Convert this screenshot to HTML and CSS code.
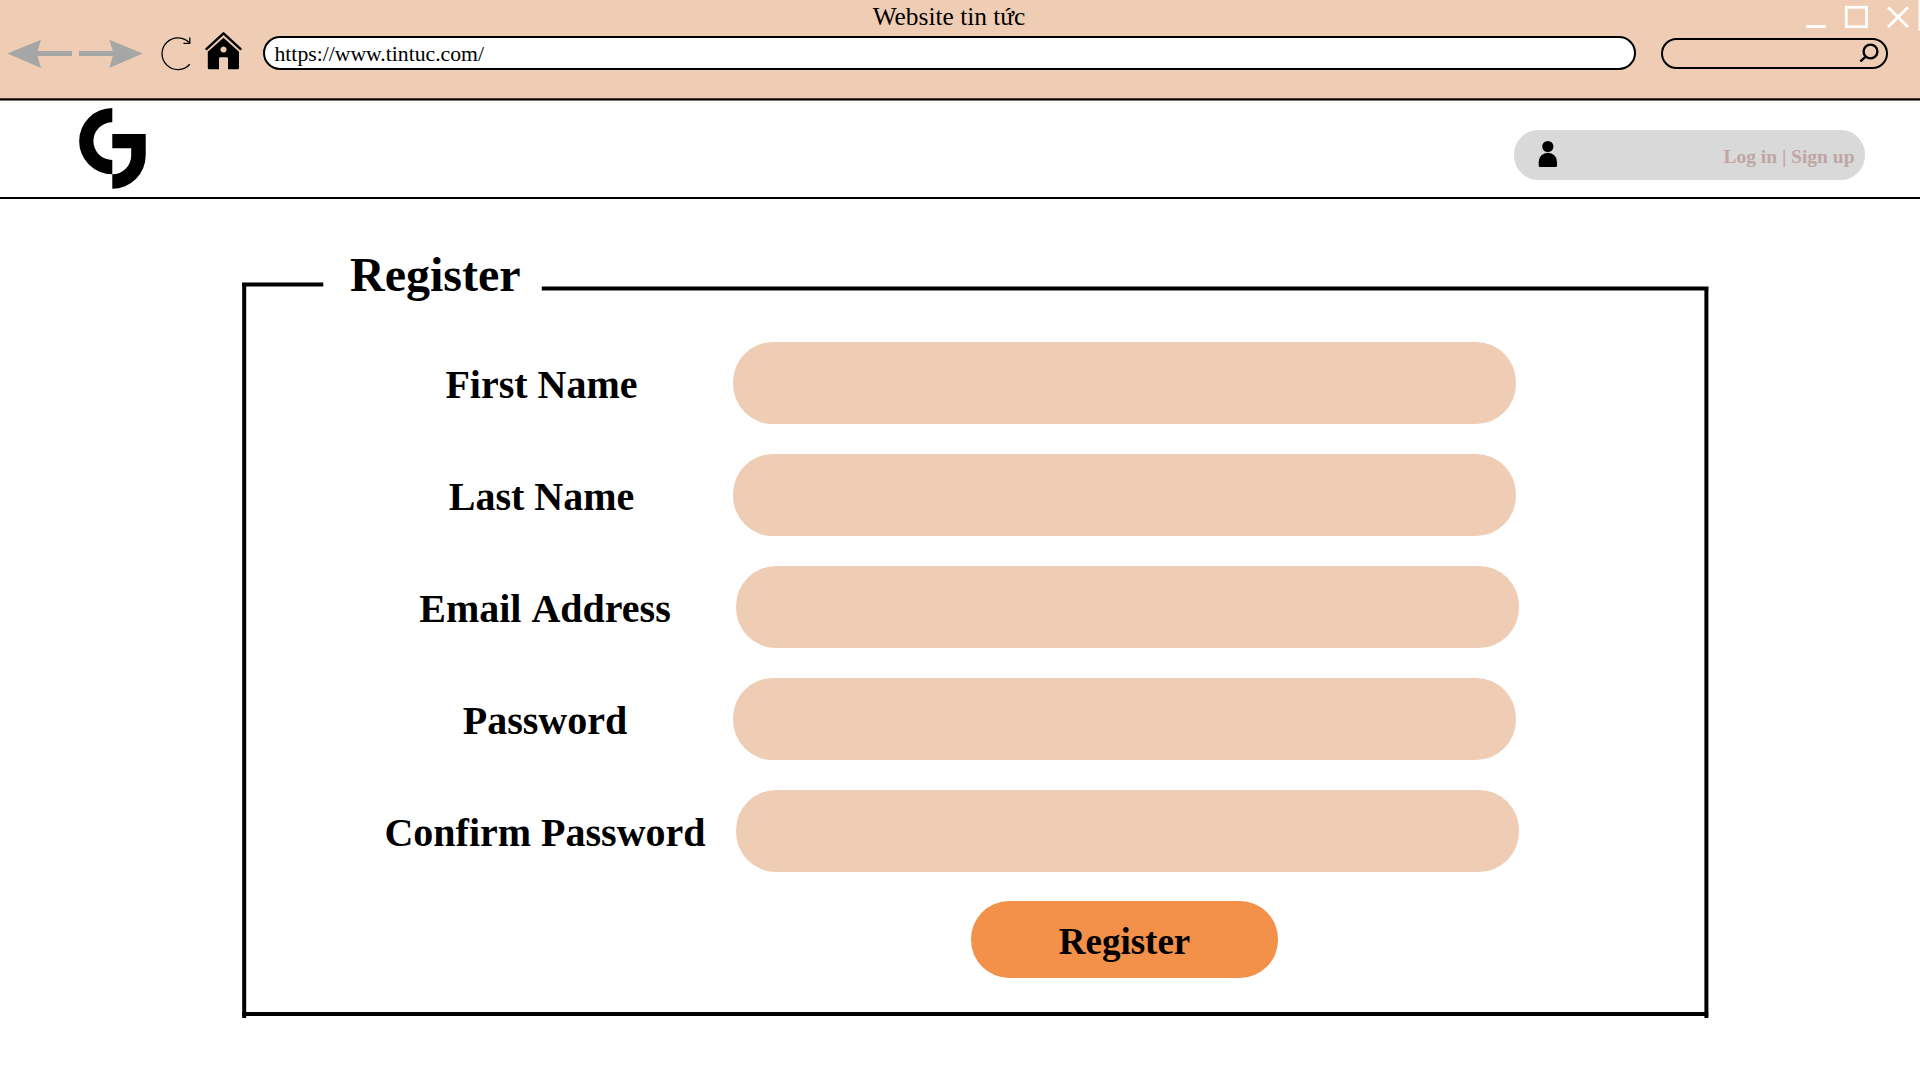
FILE: index.html
```html
<!DOCTYPE html>
<html lang="vi">
<head>
<meta charset="utf-8">
<title>Website tin tức</title>
<link rel="stylesheet" href="styles.css">
</head>
<body>
<div class="browser">
  <div class="titlebar">
    <div class="window-title">Website tin tức</div>
    <svg class="window-controls" width="120" height="32" viewBox="1800 0 120 32">
      <g fill="none" stroke="#fff">
        <path d="M1806 26.5h20" stroke-width="2.8"/>
        <rect x="1846.3" y="7.3" width="20.2" height="19.4" stroke-width="2.8"/>
        <path d="M1888 7.3l20 19.6M1908 7.3l-20 19.6" stroke-width="2.8"/>
      </g>
      <path fill="#fff" d="M1918.6 0h1.4v31h-1.4z"/>
    </svg>
  </div>
  <div class="toolbar">
    <svg class="nav-icons" width="263" height="43" viewBox="0 32 263 43">
      <g fill="#a6a6a6">
        <path d="M7.5 53.6L41 39.8L37.5 51.1H72V56.1H37.5L41 68Z"/>
        <path d="M142.7 53.6L109.3 39.8L112.8 51.1H79V56.1H112.8L109.3 68Z"/>
      </g>
      <path fill="none" stroke="#000" stroke-width="1.3" d="M189.8 64.3A15.9 15.9 0 1 1 189.8 43.1M189.8 37.5V43.4H183.4"/>
      <path fill="none" stroke="#000" stroke-width="2.4" stroke-linejoin="round" d="M205.8 49.7L223.5 33.3L241.2 49.7"/>
      <path fill-rule="evenodd" d="M223.5 37.7L239 51.7V68Q239 69.3 237.7 69.3H228V58.5Q228 57.2 226.7 57.2H220.3Q219 57.2 219 58.5V69.3H209.2Q207.8 69.3 207.8 68V51.7ZM223.5 46.4a3.1 3.1 0 1 0 .01 0Z"/>
    </svg>
    <div class="address">https://www.tintuc.com/</div>
    <div class="search">
      <svg width="20" height="20" viewBox="0 0 20 20" fill="none" stroke="#000" stroke-width="2.4">
        <circle cx="11.5" cy="8.5" r="6.9"/><path stroke-linecap="round" d="M6.4 13.8L2 17.8"/>
      </svg>
    </div>
  </div>
</div>
<header class="site-header">
  <svg class="logo" width="68" height="82" viewBox="78 107 68 82">
    <path d="M112.3 108V122.2A18.9 18.9 0 0 0 112.3 160V174.3A33.15 33.15 0 0 1 112.3 108Z"/>
    <path d="M112.3 134H145.7V155.5A33.35 33.35 0 0 1 112.3 188.8V174.3A18.8 18.8 0 0 0 131.2 155.5V148.2H112.3Z"/>
  </svg>
  <div class="account">
    <svg width="20" height="28" viewBox="1538 140 20 28">
      <circle cx="1547.8" cy="146.5" r="5.6"/>
      <path d="M1538.7 161.7a9.15 9 0 0 1 18.3 0v4q0 1.3-1.3 1.3h-15.7q-1.3 0-1.3-1.3Z"/>
    </svg>
    <span>Log in | Sign up</span>
  </div>
</header>
<main class="card">
  <svg class="frame" width="1467" height="737" viewBox="242 282 1467 737">
    <path fill="none" stroke="#000" stroke-width="4" d="M323.3 284.6H242M244.2 282.7V1018M541.8 288.6H1708.5M1706.4 286.5V1018M242 1014.1H1708.5"/>
  </svg>
  <form class="form">
    <h1 class="heading">Register</h1>
    <div class="row"><label for="first">First Name</label><input id="first" type="text"></div>
    <div class="row"><label for="last">Last Name</label><input id="last" type="text"></div>
    <div class="row wide email"><label for="email">Email Address</label><input id="email" type="email"></div>
    <div class="row pass"><label for="pass">Password</label><input id="pass" type="password"></div>
    <div class="row wide"><label for="confirm">Confirm Password</label><input id="confirm" type="password"></div>
    <button class="submit" type="button">Register</button>
  </form>
</main>
</body>
</html>
```
FILE: styles.css
```css
* { box-sizing: border-box; }

body {
  margin: 0;
  width: 1920px;
  height: 1080px;
  overflow: hidden;
  background: #fff;
  color: #000;
  font-family: "Liberation Serif", "Times New Roman", serif;
}

svg { display: block; flex: none; }

.browser {
  height: 101px;
  background: linear-gradient(#efcdb5 98px, #4a3f38 98px 99px, #000 99px 100px, #8a7768 100px);
}

.titlebar {
  display: grid;
  grid-template-columns: 120px 1fr 142px;
  height: 32px;
}

.window-title {
  grid-column: 2;
  padding-top: 1px;
  font-size: 25.4px;
  line-height: 30px;
  text-align: center;
}

.window-controls { justify-self: end; }

.toolbar {
  display: flex;
  align-items: center;
  height: 43px;
}

.address {
  width: 1373px;
  height: 34px;
  margin-bottom: 1px;
  padding-left: 9.5px;
  border: 2px solid #000;
  border-radius: 17px;
  background: #fff;
  font-size: 21.7px;
  line-height: 33px;
}

.search {
  display: flex;
  align-items: center;
  justify-content: flex-end;
  width: 227px;
  height: 31px;
  margin: 0 0 1px 25px;
  padding-right: 7px;
  border: 2px solid #000;
  border-radius: 16px;
}

.site-header {
  display: flex;
  align-items: flex-start;
  justify-content: space-between;
  height: 98px;
  padding: 6px 55px 0 78px;
  border-bottom: 2px solid #000;
}

.account {
  display: flex;
  align-items: flex-start;
  justify-content: space-between;
  width: 351.5px;
  height: 50.5px;
  margin-top: 22.6px;
  padding: 10.4px 10.5px 0 24px;
  border-radius: 24.5px;
  background: #d9d9d9;
  color: #c0a5a5;
  font-size: 19.5px;
  font-weight: bold;
}

.account span { padding-top: 6px; }
.account svg { fill: #000; }

.card {
  display: grid;
  width: 1467px;
  margin: 83px 0 0 242px;
}

.frame, .form { grid-area: 1 / 1; }

.form {
  display: flex;
  flex-direction: column;
  margin-top: -36px;
}

.heading {
  height: 96px;
  margin: 0;
  padding: 2px 0 0 108px;
  font-size: 48px;
  line-height: 54px;
}

.row {
  display: grid;
  grid-template-columns: 383px 783.4px;
  height: 82.4px;
  margin: 0 0 29.6px 108px;
}

.row label {
  padding-top: 20px;
  font-size: 40px;
  font-weight: bold;
  line-height: 46px;
  text-align: center;
}

.row input {
  min-width: 0;
  height: 82.4px;
  padding: 0 36px;
  border: 0;
  border-radius: 40px;
  background: #efcdb5;
  font: 32px "Liberation Serif", serif;
}

.row.wide { grid-template-columns: 390px 783.4px; }
.row.wide input { margin-left: -4px; width: 783.4px; }
.row.email label { word-spacing: 2.2px; }
.row.pass label { padding-left: 7px; }

.submit {
  width: 307px;
  height: 77px;
  margin: -1px 0 0 729px;
  padding: 5px 0 0;
  border: 0;
  border-radius: 38px;
  background: #f3914a;
  color: #000;
  font: bold 37px/44px "Liberation Serif", serif;
}
```
